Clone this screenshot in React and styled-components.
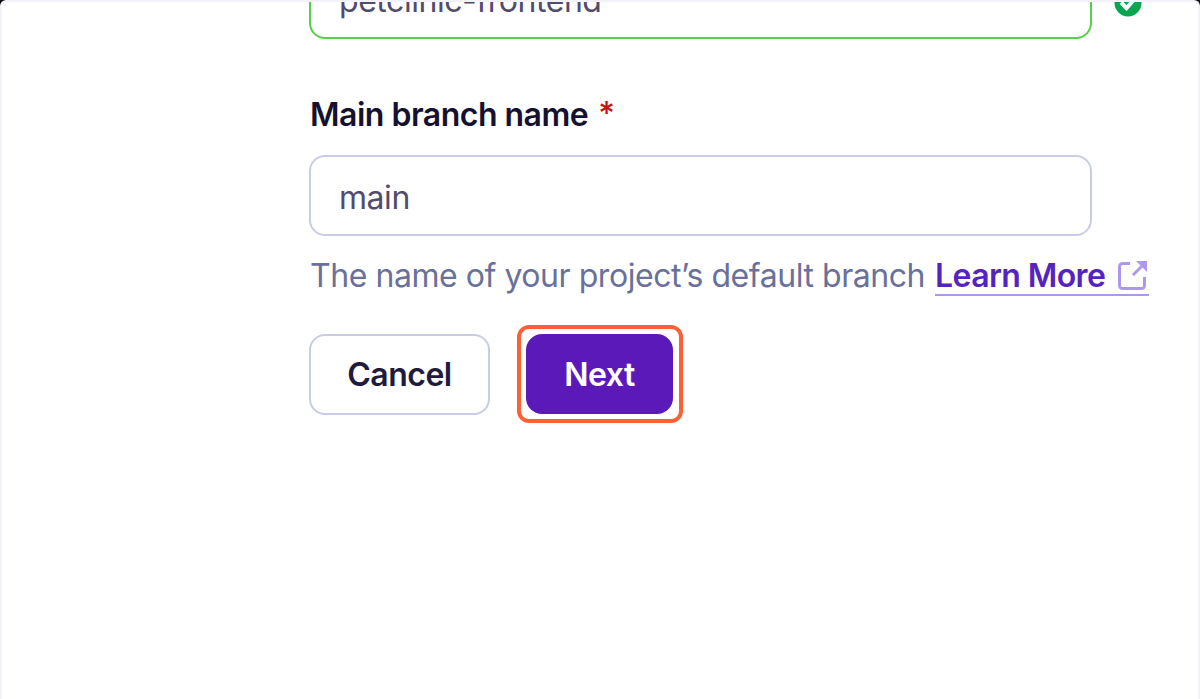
import React from "react";
import styled, { createGlobalStyle } from "styled-components";

const GlobalStyle = createGlobalStyle`
  * { box-sizing: border-box; }
  body {
    margin: 0;
    background: #000;
    font-family: Inter, "Liberation Sans", sans-serif;
    font-size: 32px;
    line-height: 40px;
    letter-spacing: -0.45px;
  }
`;

const Frame = styled.main`
  height: 699px;
  border: 2px solid #f3f2f8;
  border-bottom: 0;
  border-radius: 6px 6px 0 0;
  background: #fff;
  overflow: hidden;
`;

const Form = styled.form`
  display: flex;
  flex-direction: column;
  align-items: flex-start;
  margin: -44px 0 0 307px;
`;

const FieldRow = styled.div`
  display: flex;
  align-items: center;
  gap: 22px;
`;

const Field = styled.div`
  display: flex;
  align-items: center;
  width: 783px;
  height: 81px;
  padding: 4px 28px 0;
  border: 2px solid ${(p) => (p.$valid ? "#55d04a" : "#c9cce6")};
  border-radius: 16px;
  color: #524c6b;
`;

const CheckIcon = styled.svg`
  width: 28px;
  height: 28px;
  margin-top: 8px;
`;

const Label = styled.label`
  display: flex;
  gap: 10px;
  margin: 56px 0 20px 1px;
  color: #15112f;
  font-weight: 600;
  letter-spacing: -0.5px;
`;

const Required = styled.span`
  color: #c81212;
  font-weight: 500;
  line-height: 38px;
`;

const Help = styled.p`
  display: flex;
  gap: 10px;
  margin: 20px 0 0 1px;
  color: #69709a;
  white-space: nowrap;
`;

const Link = styled.a`
  display: flex;
  align-items: center;
  gap: 12px;
  height: 40px;
  border-bottom: 2px solid #ad98ee;
  color: #5524c0;
  font-weight: 600;
  letter-spacing: -0.6px;
  line-height: 38px;
`;

const LinkText = styled.span`
  padding-top: 2px;
`;

const ExternalIcon = styled.svg`
  width: 32px;
  height: 32px;
`;

const Actions = styled.div`
  display: flex;
  align-items: center;
  gap: 27px;
  margin-top: 29px;
`;

const Button = styled.button`
  width: ${(p) => (p.$primary ? "147px" : "181px")};
  height: ${(p) => (p.$primary ? "80px" : "81px")};
  padding: 1px 0 0;
  border: ${(p) => (p.$primary ? "0" : "2px solid #c9cce6")};
  border-radius: 16px;
  background: ${(p) => (p.$primary ? "#5b19b9" : "#fff")};
  color: ${(p) => (p.$primary ? "#fff" : "#201b3c")};
  font: 600 32px/40px Inter, "Liberation Sans", sans-serif;
  letter-spacing: -0.5px;
`;

const Highlight = styled.div`
  display: flex;
  width: 166px;
  height: 98px;
  padding: 5px;
  border: 4px solid #ff6035;
  border-radius: 12px;
`;

export default function App() {
  return (
    <>
      <GlobalStyle />
      <Frame>
        <Form>
          <FieldRow>
            <Field $valid>petclinic-frontend</Field>
            <CheckIcon viewBox="0 0 28 28">
              <circle cx="14" cy="14" r="13.5" fill="#08a650" />
              <path d="M7 13.500l5.500 5.500 9-10" fill="none" stroke="#fff" strokeWidth="4" />
            </CheckIcon>
          </FieldRow>
          <Label>
            <span>Main branch name</span>
            <Required>*</Required>
          </Label>
          <Field>main</Field>
          <Help>
            <span>The name of your project’s default branch</span>
            <Link>
              <LinkText>Learn More</LinkText>
              <ExternalIcon viewBox="0 0 32 32" fill="none" stroke="#ad98ee" strokeWidth="3">
                <path d="M13 4.500H5.500a3 3 0 0 0-3 3v19a3 3 0 0 0 3 3h19a3 3 0 0 0 3-3V18" />
                <path d="M16 16L28 4" />
                <path d="M19 2H30v11z" fill="#ad98ee" stroke="none" />
              </ExternalIcon>
            </Link>
          </Help>
          <Actions>
            <Button type="button">Cancel</Button>
            <Highlight>
              <Button type="button" $primary>Next</Button>
            </Highlight>
          </Actions>
        </Form>
      </Frame>
    </>
  );
}
